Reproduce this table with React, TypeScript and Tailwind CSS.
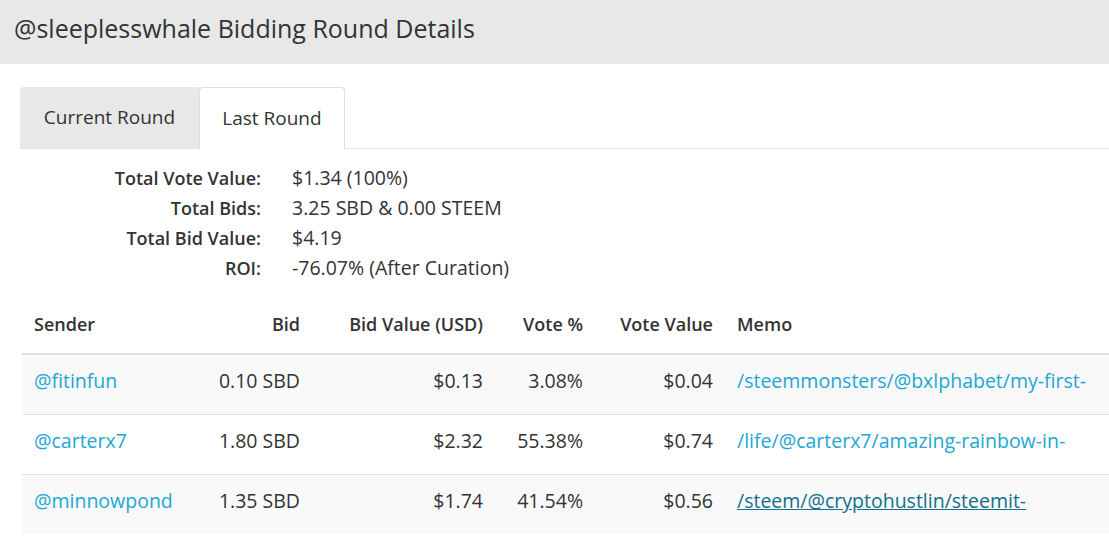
const summary = [
  { label: "Total Vote Value:", value: "$1.34 (100%)" },
  { label: "Total Bids:", value: "3.25 SBD & 0.00 STEEM" },
  { label: "Total Bid Value:", value: "$4.19" },
  { label: "ROI:", value: "-76.07% (After Curation)" },
];

const bids = [
  {
    sender: "@fitinfun",
    bid: "0.10 SBD",
    usd: "$0.13",
    pct: "3.08%",
    vote: "$0.04",
    memo: "/steemmonsters/@bxlphabet/my-first-",
    hover: false,
  },
  {
    sender: "@carterx7",
    bid: "1.80 SBD",
    usd: "$2.32",
    pct: "55.38%",
    vote: "$0.74",
    memo: "/life/@carterx7/amazing-rainbow-in-",
    hover: false,
  },
  {
    sender: "@minnowpond",
    bid: "1.35 SBD",
    usd: "$1.74",
    pct: "41.54%",
    vote: "$0.56",
    memo: "/steem/@cryptohustlin/steemit-",
    hover: true,
  },
];

const cols = "grid grid-cols-[178px_112px_183px_100px_130px_1fr] whitespace-nowrap";

export default function App() {
  return (
    <div className="min-h-[542px] bg-white text-[#333] font-['Open_Sans',sans-serif]">
      {/* Panel heading */}
      <div className="h-16 bg-[#e8e8e8] px-[14px] pb-[6px] flex items-center">
        <h1 className="text-[25px] text-[#333]">@sleeplesswhale Bidding Round Details</h1>
      </div>

      <div className="pl-5 pt-[23px]">
        {/* Tabs */}
        <div className="flex border-b border-[#e3e3e3] text-[19px]">
          <div className="w-[179px] h-[61px] bg-[#e8e8e8] flex items-center justify-center rounded-tl">
            Current Round
          </div>
          <div className="w-[146px] h-[62px] -mb-px bg-white border border-b-0 border-[#ddd] rounded-t flex items-center justify-center">
            Last Round
          </div>
        </div>

        {/* Summary */}
        <div className="grid grid-cols-[241px_1fr] gap-x-[31px] pt-[14px] text-[19.5px] leading-[30px]">
          {summary.map(({ label, value }) => (
            <div key={label} className="contents">
              <div className="text-right font-semibold text-[18px]">{label}</div>
              <div>{value}</div>
            </div>
          ))}
        </div>

        {/* Bids table */}
        <div className="mt-[15px] ml-[2px] text-[19.5px]">
          <div className={`${cols} h-[56px] pb-[2px] items-center font-semibold text-[18px] border-b border-[#ddd]`}>
            <div className="px-3">Sender</div>
            <div className="px-3 text-right">Bid</div>
            <div className="px-3 text-right">Bid Value (USD)</div>
            <div className="px-3 text-right">Vote %</div>
            <div className="px-3 text-right">Vote Value</div>
            <div className="px-3">Memo</div>
          </div>
          {bids.map((b, i) => (
            <div
              key={b.sender}
              className={`${cols} h-[60px] pb-[7px] items-center border-t border-[#e3e3e3] first:border-t-0 ${
                i % 2 === 0 ? "bg-[#f9f9f9]" : "bg-white"
              }`}
            >
              <div className="px-3 text-[#23a6d5]">{b.sender}</div>
              <div className="px-3 text-right">{b.bid}</div>
              <div className="px-3 text-right">{b.usd}</div>
              <div className="px-3 text-right">{b.pct}</div>
              <div className="px-3 text-right">{b.vote}</div>
              <div className="px-3">
                <span className={b.hover ? "text-[#10708d] underline" : "text-[#23a6d5]"}>{b.memo}</span>
              </div>
            </div>
          ))}
        </div>
      </div>
    </div>
  );
}
